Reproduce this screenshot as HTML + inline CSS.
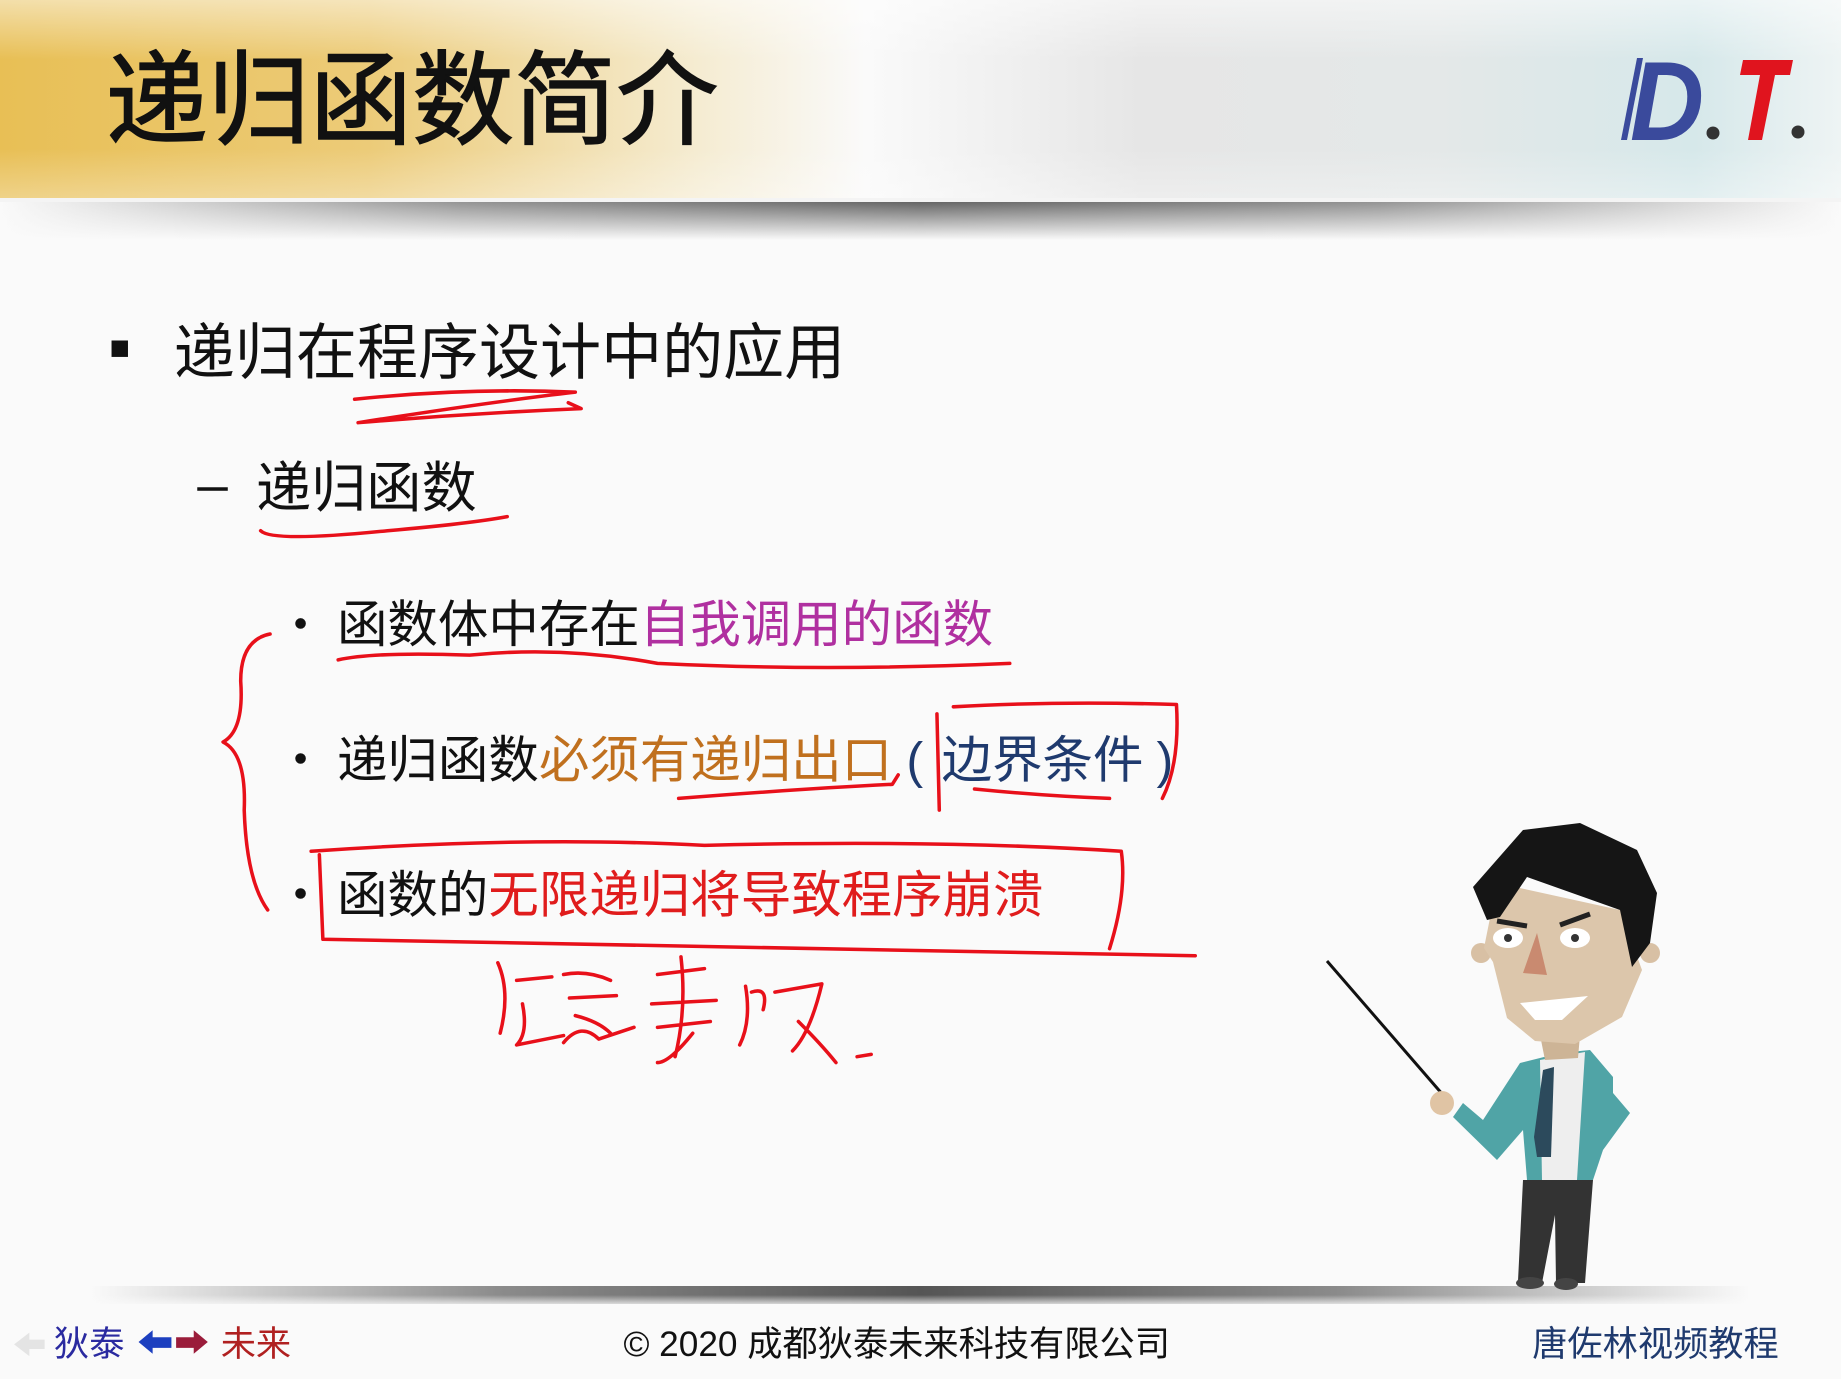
<!DOCTYPE html>
<html><head><meta charset="utf-8">
<style>
html,body{margin:0;padding:0;background:#fafafa;}
svg{display:block;}
text{font-family:"Liberation Sans","Noto Sans CJK SC","WenQuanYi Zen Hei",sans-serif;}
</style></head>
<body>
<svg width="1841" height="1379" viewBox="0 0 1841 1379" xmlns="http://www.w3.org/2000/svg">
<defs>
<linearGradient id="hd" x1="0" x2="1" y1="0" y2="0">
<stop offset="0" stop-color="#e8bf55"/>
<stop offset="0.2" stop-color="#eccb78"/>
<stop offset="0.38" stop-color="#f5ecd2"/>
<stop offset="0.47" stop-color="#fafafa"/>
<stop offset="0.62" stop-color="#e6e6e6"/>
<stop offset="0.78" stop-color="#e4e8e8"/>
<stop offset="0.92" stop-color="#d6e8ea"/>
<stop offset="1" stop-color="#eef4f4"/>
</linearGradient>
<linearGradient id="hv" x1="0" x2="0" y1="0" y2="1">
<stop offset="0" stop-color="#fff" stop-opacity="0.5"/>
<stop offset="0.3" stop-color="#fff" stop-opacity="0"/>
<stop offset="0.75" stop-color="#fff" stop-opacity="0"/>
<stop offset="1" stop-color="#fff" stop-opacity="0.3"/>
</linearGradient>
<linearGradient id="shh" x1="0" x2="1">
<stop offset="0" stop-color="#fafafa"/>
<stop offset="0.25" stop-color="#8a8a8a"/>
<stop offset="0.5" stop-color="#555"/>
<stop offset="0.75" stop-color="#8a8a8a"/>
<stop offset="1" stop-color="#fafafa"/>
</linearGradient>
<linearGradient id="shv" x1="0" x2="0" y1="0" y2="1">
<stop offset="0" stop-color="#fafafa" stop-opacity="0"/>
<stop offset="1" stop-color="#fafafa" stop-opacity="1"/>
</linearGradient>
</defs>

<rect x="0" y="0" width="1841" height="198" fill="url(#hd)"/>
<rect x="0" y="0" width="1841" height="198" fill="url(#hv)"/>
<rect x="0" y="198" width="1841" height="42" fill="url(#shh)"/>
<rect x="0" y="198" width="1841" height="42" fill="url(#shv)"/>
<rect x="0" y="198" width="1841" height="4" fill="#f4f4f4"/>

<polygon points="1621,140 1627,140 1643,58 1637,58" fill="#3a4a9c"/>
<text x="1630" y="140" font-size="112" font-weight="bold" font-style="italic" fill="#3a4a9c" textLength="74" lengthAdjust="spacingAndGlyphs">D</text>
<circle cx="1713" cy="133" r="6.5" fill="#333"/>
<polygon points="1743,60 1793,60 1790,75 1775,75 1762,140 1748,140 1760,75 1740,75" fill="#e0141e"/>
<circle cx="1798" cy="132" r="6.5" fill="#333"/>

<rect x="90" y="1286" width="1660" height="18" fill="url(#shh)"/>
<rect x="90" y="1295" width="1660" height="12" fill="url(#shv)"/>

<g>
<line x1="1327" y1="961" x2="1450" y2="1103" stroke="#111" stroke-width="3"/>
<polygon points="1523,1180 1593,1180 1585,1283 1556,1283 1555,1215 1542,1283 1518,1281" fill="#333"/>
<ellipse cx="1530" cy="1283" rx="14" ry="6" fill="#444"/>
<ellipse cx="1566" cy="1284" rx="12" ry="6" fill="#444"/>
<polygon points="1520,1063 1560,1053 1590,1050 1613,1077 1613,1093 1630,1113 1603,1150 1593,1180 1527,1180 1523,1130 1497,1160 1453,1117 1463,1103 1483,1120 1507,1083" fill="#50a4a6"/>
<polygon points="1540,1060 1585,1052 1577,1180 1542,1180" fill="#eeeeee"/>
<polygon points="1543,1070 1554,1067 1551,1157 1537,1157 1534,1137" fill="#2c4a5c"/>
<circle cx="1442" cy="1103" r="12" fill="#e0c4a4"/>
<circle cx="1481" cy="953" r="10" fill="#d8c0a4"/>
<circle cx="1650" cy="953" r="10" fill="#d8c0a4"/>
<polygon points="1540,1035 1580,1035 1578,1058 1545,1060" fill="#cdb496"/>
<polygon points="1497,883 1620,910 1642,970 1622,1017 1575,1044 1535,1041 1507,1018 1493,962 1484,948" fill="#dcc6ab"/>
<polygon points="1473,887 1523,830 1580,823 1637,850 1657,893 1650,943 1632,967 1620,910 1527,877 1500,917 1487,920" fill="#151515"/>
<ellipse cx="1508" cy="938" rx="15" ry="10" fill="#fff"/>
<ellipse cx="1575" cy="938" rx="15" ry="10" fill="#fff"/>
<circle cx="1508" cy="938" r="4" fill="#333"/>
<circle cx="1575" cy="938" r="4" fill="#333"/>
<path d="M1497,921 L1527,926 M1560,925 L1590,914" stroke="#222" stroke-width="5"/>
<polygon points="1537,933 1523,973 1547,975" fill="#c98a70"/>
<polygon points="1520,1003 1588,996 1562,1020 1535,1020" fill="#fff"/>
</g>

<g transform="scale(1.17411)">
<text x="90" y="116" font-size="87" fill="#111" stroke="#111" stroke-width="1.2">递归函数简介</text>

<rect x="95" y="290" width="14" height="14" fill="#111"/>
<text x="148" y="318" font-size="52" fill="#111">递归在程序设计中的应用</text>

<rect x="168" y="415" width="26" height="3" fill="#111"/>
<text x="218" y="432" font-size="47" fill="#111">递归函数</text>

<circle cx="256" cy="531" r="4.5" fill="#111"/>
<text x="287" y="547" font-size="43" fill="#111">函数体中存在<tspan fill="#b030a0">自我调用的函数</tspan></text>

<circle cx="256" cy="646" r="4.5" fill="#111"/>
<text x="287" y="662" font-size="43" fill="#111">递归函数<tspan fill="#c0701e">必须有递归出口</tspan><tspan fill="#1f3a6e" x="772">(</tspan><tspan fill="#1f3a6e" x="802">边界条件</tspan><tspan fill="#1f3a6e" x="985">)</tspan></text>

<circle cx="256" cy="761" r="4.5" fill="#111"/>
<text x="287" y="777" font-size="43" fill="#111">函数的<tspan fill="#e01c1c">无限递归将导致程序崩溃</tspan></text>

<g fill="none" stroke="#e8101a" stroke-width="3" stroke-linecap="round" stroke-linejoin="round">
<path d="M302,340 Q400,330 490,334 Q420,342 305,360 Q400,352 495,348 L484,343"/>
<path d="M222,452 Q232,462 330,452 Q400,446 432,440"/>
<path d="M230,540 Q205,545 205,580 Q208,622 190,632 Q210,642 208,690 Q210,750 228,775"/>
<path d="M288,562 Q320,555 400,558 Q480,550 560,565 Q700,572 860,565"/>
<path d="M578,680 Q680,672 760,668 L765,660"/>
<path d="M798,608 L800,690"/>
<path d="M812,602 Q900,597 1002,600 Q1005,650 990,680"/>
<path d="M830,672 Q890,678 945,680"/>
<path d="M265,725 Q450,712 600,720 Q800,715 955,725 Q960,760 945,808"/>
<path d="M272,728 L275,800 Q600,806 1018,814"/>
<path d="M424,820 Q435,845 426,880 M440,835 L470,832 M445,855 Q450,880 440,890 L480,882"/>
<path d="M480,830 Q500,826 520,835 M485,850 L525,848 M490,865 Q510,870 520,880 M480,888 Q495,870 510,885 Q525,880 540,875"/>
<path d="M560,830 L600,825 M580,815 Q585,860 575,900 M555,855 L610,852 M560,875 L605,870 M590,880 Q570,905 560,905"/>
<path d="M635,840 Q640,870 630,890 M640,845 Q655,840 650,860 M660,845 L700,838 Q690,880 675,895 M680,870 Q700,890 712,905 M730,900 L742,898"/>
</g>

<polygon points="12,1145 25,1135 25,1141 38,1141 38,1149 25,1149 25,1155" fill="#e4e4e4"/>
<text x="46" y="1155" font-size="30" fill="#2a2aa0">狄泰</text>
<polygon points="118,1143 130,1133 130,1139 146,1139 146,1148 130,1148 130,1153" fill="#1c3fbf"/>
<polygon points="177,1143 165,1133 165,1139 150,1139 150,1148 165,1148 165,1153" fill="#9a1c3a"/>
<text x="188" y="1155" font-size="30" fill="#b02020">未来</text>
<text x="531" y="1155" font-size="30" fill="#111">© 2020 成都狄泰未来科技有限公司</text>
<text x="1305" y="1155" font-size="30" fill="#1f3a6e">唐佐林视频教程</text>
</g>
</svg>
</body></html>
